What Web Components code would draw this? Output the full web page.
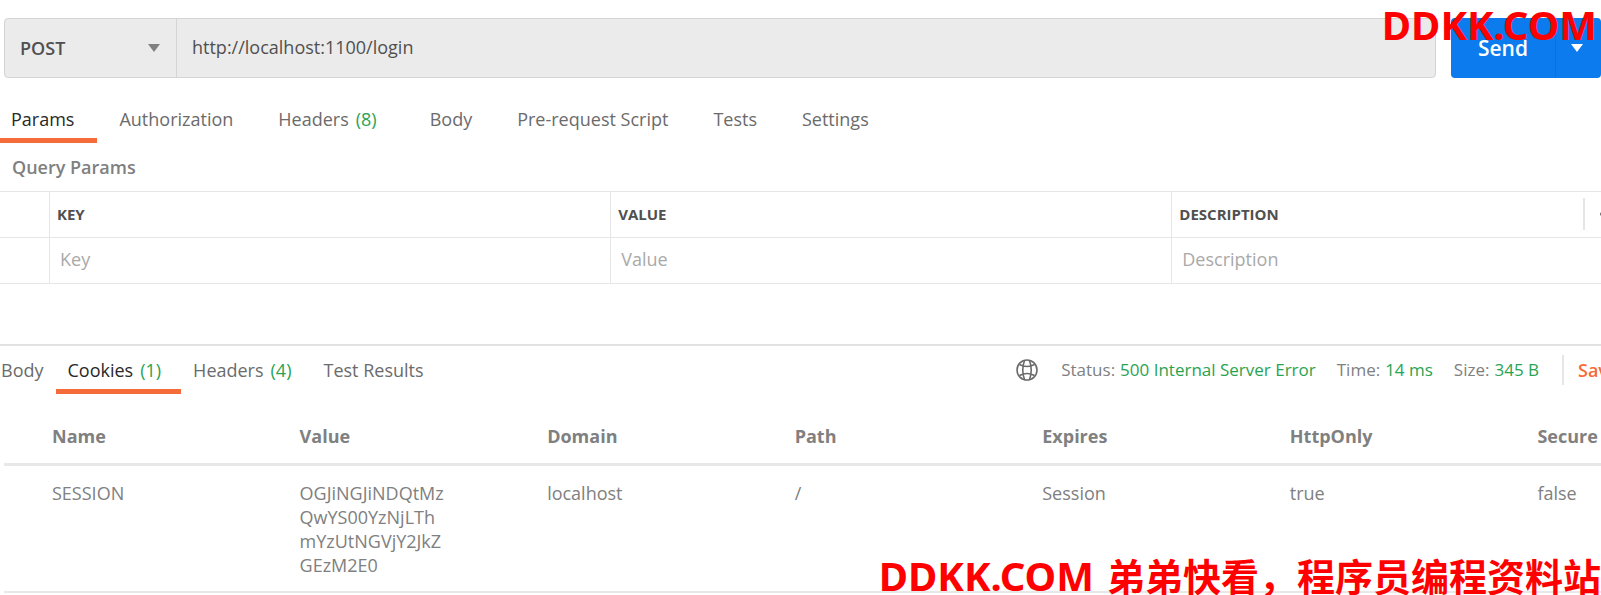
<!DOCTYPE html>
<html lang="en">
<head>
<meta charset="utf-8">
<title>POST http://localhost:1100/login</title>
<style>
html, body { margin: 0; }
body { background: #fff; color: #6b6b6b; font: 18px/24px "Open Sans", "Noto Sans", "Noto Sans CJK SC", sans-serif; overflow: hidden; }
</style>
</head>
<body>
<api-client></api-client>

<template id="t-client">
<style>
:host { display: block; position: relative; overflow: hidden; min-height: 100vh; }
.bar { padding: 18px 0 0 4px; }
.wide { width: calc(100% + 132px); }
.request-tabs { margin: 16px 0 0 -11px; --tab-end: 23px; }
h2 { margin: 0; padding: 12px 12px; font-size: 18px; line-height: 24px; font-weight: 600; color: #808080; }
.response { margin-top: 60px; border-top: 2px solid #e2e2e2; display: flex; align-items: center; }
.response tab-strip { margin-left: -11px; --tab-pad: 12px; --tab-end: 12px; --tab-top: 12px; }
response-meta { margin-left: auto; }
.cookies { padding-left: 4px; width: calc(100% + 136px); }
</style>
<request-bar class="bar"></request-bar>
<tab-strip class="request-tabs">
  <tab-item active>Params</tab-item>
  <tab-item>Authorization</tab-item>
  <tab-item count="(8)">Headers</tab-item>
  <tab-item>Body</tab-item>
  <tab-item>Pre-request Script</tab-item>
  <tab-item>Tests</tab-item>
  <tab-item>Settings</tab-item>
</tab-strip>
<h2>Query Params</h2>
<params-table class="wide"></params-table>
<div class="response wide">
  <tab-strip>
    <tab-item>Body</tab-item>
    <tab-item active count="(1)">Cookies</tab-item>
    <tab-item count="(4)">Headers</tab-item>
    <tab-item>Test Results</tab-item>
  </tab-strip>
  <response-meta></response-meta>
</div>
<cookie-table class="cookies"></cookie-table>
<page-mark corner="top">DDKK.COM</page-mark>
<page-mark corner="bottom">DDKK.COM <span lang="zh-CN" slot="cjk">弟弟快看，程序员编程资料站</span></page-mark>
</template>

<template id="t-bar">
<style>
:host { display: flex; gap: 15px; height: 60px; }
.field { flex: 1; display: flex; box-sizing: border-box; border: 1px solid #d4d4d4; border-radius: 4px; background: #ebebeb; overflow: hidden; }
.method { width: 171px; display: grid; border-right: 1px solid #d4d4d4; align-items: center; }
.method > * { grid-area: 1 / 1; }
select { appearance: none; border: 0; margin: 0; background: none; width: 100%; height: 100%; padding: 0 15px; font: inherit; font-weight: 600; color: #505050; }
.method svg { justify-self: end; margin-right: 16px; pointer-events: none; fill: #808080; }
input { flex: 1; min-width: 0; border: 0; margin: 0; background: none; padding: 0 15px 2px; font: inherit; color: #505050; }
.send { display: flex; width: 150px; border-radius: 4px; background: #0b7bee; overflow: hidden; }
button { border: 0; margin: 0; padding: 0; background: none; font: inherit; color: #fff; }
.go { flex: 1; font-size: 21px; font-weight: 600; }
.more { width: 46px; border-left: 1px solid #1070d6; padding-right: 4px; }
.more svg { fill: #fff; display: block; margin: auto; }
</style>
<div class="field">
  <label class="method">
    <select aria-label="Method"><option>POST</option></select>
    <svg width="12" height="8"><path d="M0 0H12L6 8Z"/></svg>
  </label>
  <input type="text" aria-label="Request URL" value="http://localhost:1100/login">
</div>
<div class="send">
  <button class="go">Send</button>
  <button class="more" aria-label="Send options"><svg width="12" height="8"><path d="M0 0H12L6 8Z"/></svg></button>
</div>
</template>

<template id="t-item">
<style>
:host { display: block; }
button { display: flex; gap: 7px; border: 0; border-bottom: 5px solid transparent; margin: 0; background: none; font: inherit; color: #6b6b6b; padding: var(--tab-top, 13px) var(--tab-end, 22px) 7px var(--tab-pad, 22px); white-space: nowrap; }
:host([active]) button { color: #282828; border-color: #f56c3a; }
span { color: #29a352; padding-right: 8px; }
span:empty { display: none; }
</style>
<button role="tab"><slot></slot><span></span></button>
</template>

<template id="t-params">
<style>
:host { display: block; }
table { width: 100%; border-collapse: collapse; table-layout: fixed; }
tr { height: 46px; border-top: 1px solid #e6e6e6; border-bottom: 1px solid #e6e6e6; }
th, td { padding: 0; text-align: left; }
th + th, td + td { border-left: 1px solid #e6e6e6; }
.pick { width: 49px; }
th { font-size: 15px; font-weight: 700; color: #505050; }
th div { display: flex; align-items: center; height: 32px; padding: 0 0 2px 7px; }
.more { margin-left: auto; width: 150px; height: 32px; border: 0; border-left: 2px solid #e6e6e6; background: none; padding: 0 0 0 15px; text-align: left; }
.more svg { display: block; fill: #6b6b6b; }
input { display: block; box-sizing: border-box; width: 100%; height: 44px; border: 0; margin: 0; padding: 0 10px 4px; background: none; font: inherit; }
input::placeholder { color: #a9a9a9; opacity: 1; }
</style>
<table>
  <thead><tr><th class="pick"></th><th><div>KEY</div></th><th><div>VALUE</div></th><th><div>DESCRIPTION<button class="more" aria-label="More"><svg width="20" height="4"><circle cx="2" cy="2" r="2"/><circle cx="9" cy="2" r="2"/><circle cx="16" cy="2" r="2"/></svg></button></div></th></tr></thead>
  <tbody><tr><td></td><td><input aria-label="Key" placeholder="Key"></td><td><input aria-label="Value" placeholder="Value"></td><td><input aria-label="Description" placeholder="Description"></td></tr></tbody>
</table>
</template>

<template id="t-meta">
<style>
:host { display: flex; align-items: center; font-size: 17px; color: #808080; white-space: nowrap; }
svg { fill: none; stroke: #6b6b6b; stroke-width: 1.6; margin-right: 23px; }
p { margin: 0 21px 0 0; display: flex; gap: 5px; }
p:last-of-type { margin-right: 23px; }
b { font-weight: 400; color: #29a352; }
.save { box-sizing: border-box; width: 171px; height: 30px; border: 0; border-left: 2px solid #e6e6e6; background: none; padding: 0 0 0 14px; margin: 0; font: inherit; font-size: 18px; font-weight: 600; color: #f56c3a; text-align: left; }
</style>
<svg width="22" height="22" viewBox="0 0 22 22"><circle cx="11" cy="11" r="10"/><path d="M8.500 1.500Q5 11 8.500 20.500M13.500 1.500Q17 11 13.500 20.500M3.500 5.500Q11 9.500 18.500 5.500M3.500 16.500Q11 12.500 18.500 16.500"/></svg>
<p>Status:<b>500 Internal Server Error</b></p>
<p>Time:<b>14 ms</b></p>
<p>Size:<b>345 B</b></p>
<button class="save">Save</button>
</template>

<template id="t-cookies">
<style>
:host { display: block; box-sizing: border-box; }
table { width: 100%; border-collapse: collapse; table-layout: fixed; color: #808080; }
th, td { text-align: left; vertical-align: top; padding: 0 48px; word-break: break-all; }
th { font-weight: 700; padding-top: 30px; padding-bottom: 15px; word-break: normal; }
td { padding-top: 15px; padding-bottom: 14px; }
thead tr { border-bottom: 3px solid #e8e8e8; }
tbody tr { border-bottom: 2px solid #e8e8e8; }
</style>
<table>
  <thead><tr><th>Name</th><th>Value</th><th>Domain</th><th>Path</th><th>Expires</th><th>HttpOnly</th><th>Secure</th></tr></thead>
  <tbody><tr><td>SESSION</td><td>OGJiNGJiNDQtMzQwYS00YzNjLThmYzUtNGVjY2JkZGEzM2E0</td><td>localhost</td><td>/</td><td>Session</td><td>true</td><td>false</td></tr></tbody>
</table>
</template>

<template id="t-strip">
<style>:host { display: flex; }</style>
<slot></slot>
</template>

<template id="t-mark">
<style>
:host { position: absolute; right: 0; display: flex; align-items: baseline; gap: 13px; font: 700 40px/48px "Noto Sans", "Noto Sans CJK SC", sans-serif; color: #f00; white-space: nowrap; pointer-events: none; }
:host([corner="top"]) { top: 1px; right: 4px; }
:host([corner="bottom"]) { bottom: -5px; }
::slotted(span) { font-size: 38px; font-family: "Noto Sans CJK SC", sans-serif; }
</style>
<slot></slot><slot name="cjk"></slot>
</template>

<script>
const define = (name, templateId, setup) => customElements.define(name, class extends HTMLElement {
  constructor() {
    super();
    this.attachShadow({ mode: "open" }).append(document.getElementById(templateId).content.cloneNode(true));
  }
  connectedCallback() { if (setup) setup(this); }
});
define("tab-item", "t-item", el => {
  el.shadowRoot.querySelector("span").textContent = el.getAttribute("count") || "";
  el.shadowRoot.querySelector("button").setAttribute("aria-selected", el.hasAttribute("active"));
});
define("tab-strip", "t-strip", el => el.setAttribute("role", "tablist"));
define("request-bar", "t-bar");
define("params-table", "t-params");
define("response-meta", "t-meta");
define("cookie-table", "t-cookies");
define("page-mark", "t-mark");
define("api-client", "t-client");
</script>
</body>
</html>
